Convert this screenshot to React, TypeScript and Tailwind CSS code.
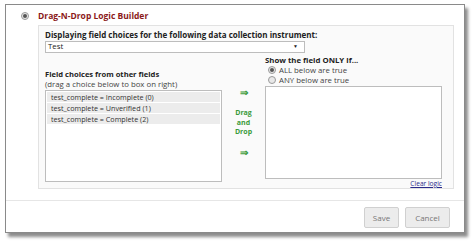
import React from "react";

const choices = [
  "test_complete = Incomplete (0)",
  "test_complete = Unverified (1)",
  "test_complete = Complete (2)",
];

function Radio({ checked }: { checked?: boolean }) {
  return (
    <span className="inline-flex h-[8px] w-[8px] items-center justify-center rounded-full border border-[#9a9a9a] bg-[#e8e8e8]">
      {checked && <span className="h-[4px] w-[4px] rounded-full bg-[#555]" />}
    </span>
  );
}

export default function App() {
  return (
    <div
      className="h-[243px] w-[474px] bg-white pl-[5px] pt-[4px]"
      style={{ fontFamily: '"Open Sans", "Liberation Sans", sans-serif' }}
    >
      <div className="flex h-[229px] w-[460px] flex-col border border-[#8a8a8a] bg-white shadow-[3px_4px_3px_rgba(0,0,0,0.45)]">
        <div className="flex items-center pl-[15px] pt-[5px]">
          <Radio checked />
          <span className="ml-[9px] text-[8.5px] font-bold leading-[11px] text-[#8b1a1a]">
            Drag-N-Drop Logic Builder
          </span>
        </div>
        <div className="ml-[32px] mt-[4px] h-[164px] w-[416px] border border-[#e2e2e2] bg-[#fafafa] px-[6px] pt-[4px]">
          <div className="text-[8px] font-bold leading-[10px] text-[#222]">
            Displaying field choices for the following data collection instrument:
          </div>
          <div className="mt-[1px] flex h-[12px] w-[260px] items-center justify-between border border-[#bdbdbd] bg-white pl-[2px] pr-[6px] text-[7.8px] text-[#222]">
            <span>Test</span>
            <span className="text-[5px]">▼</span>
          </div>
          <div className="mt-[2px] flex">
            <div className="flex w-[177px] flex-col pt-[14px]">
              <div className="text-[7.6px] font-bold leading-[10px] text-[#222]">
                Field choices from other fields
              </div>
              <div className="text-[7.8px] leading-[10px] text-[#444]">
                (drag a choice below to box on right)
              </div>
              <div className="mt-[1px] h-[92px] border border-[#bdbdbd] bg-white p-[1px]">
                {choices.map((c) => (
                  <div
                    key={c}
                    className="mb-[1px] h-[10px] bg-[#ececec] pl-[4px] text-[7.2px] leading-[10px] text-[#333]"
                  >
                    {c}
                  </div>
                ))}
              </div>
            </div>
            <div className="flex w-[43px] flex-col items-center pt-[32px] text-[7px] font-bold leading-[9.5px] text-[#3a9b3a]">
              <span className="text-[10px] leading-[10px]">⇒</span>
              <span className="mt-[11px]">Drag</span>
              <span>and</span>
              <span>Drop</span>
              <span className="mt-[10px] text-[10px] leading-[10px]">⇒</span>
            </div>
            <div className="flex flex-col">
              <div className="text-[7.8px] font-bold leading-[10px] text-[#222]">
                Show the field ONLY if...
              </div>
              <div className="flex items-center gap-[3px] pl-[3px] text-[7.8px] leading-[10px] text-[#444]">
                <Radio checked />
                <span>ALL below are true</span>
              </div>
              <div className="flex items-center gap-[3px] pl-[3px] text-[7.8px] leading-[10px] text-[#444]">
                <Radio />
                <span>ANY below are true</span>
              </div>
              <div className="mt-[1px] h-[93px] w-[177px] border border-[#bdbdbd] bg-white" />
              <div className="mt-[1px] text-right text-[6.6px] leading-[8px] text-[#2a2a8a] underline">
                Clear logic
              </div>
            </div>
          </div>
        </div>
        <div className="mt-[11px] border-t border-[#e6e6e6]" />
        <div className="flex justify-end gap-[6px] pr-[14px] pt-[6px]">
          <button className="h-[21px] w-[35px] rounded-[2px] border border-[#d0d0d0] bg-[#ececec] text-[8px] text-[#777]">
            Save
          </button>
          <button className="h-[21px] w-[45px] rounded-[2px] border border-[#d0d0d0] bg-[#ececec] text-[8px] text-[#777]">
            Cancel
          </button>
        </div>
      </div>
    </div>
  );
}
